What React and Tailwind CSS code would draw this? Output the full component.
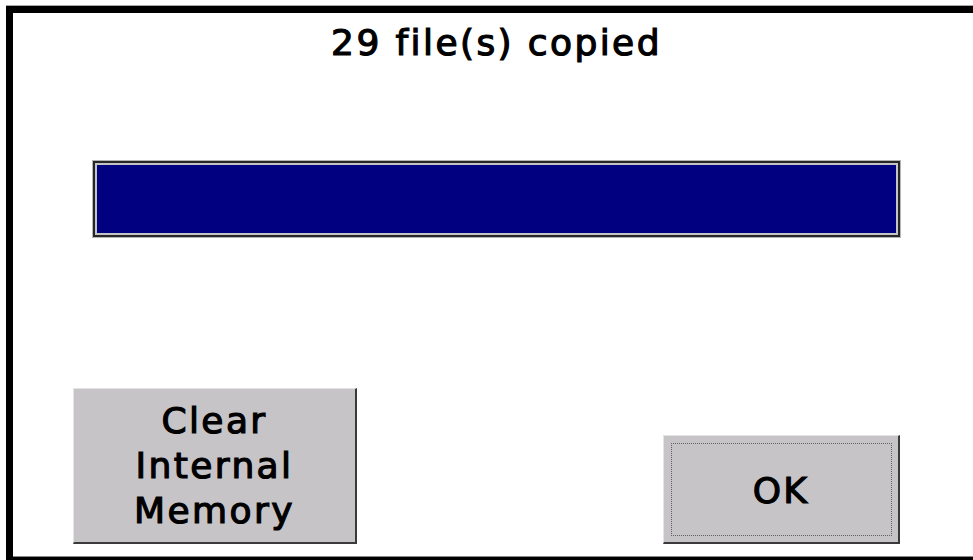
export default function App() {
  const font = { fontFamily: '"DejaVu Sans", Verdana, sans-serif' };
  return (
    <div className="h-[560px] w-[973px] overflow-hidden bg-white" style={font}>
      <div className="ml-[6px] mt-[5px] h-[560px] border-t border-[#a8a8a8]">
        <div className="flex h-[559px] flex-col border-l-[7px] border-t-[7px] border-black bg-black">
          <div className="flex h-[544px] flex-col border-b border-[#8a8a8a] bg-white">
            <div className="ml-[79px] mt-[8px] w-[809px] text-center text-[36px] leading-[44px] tracking-[2.4px] text-black [-webkit-text-stroke:1.2px_black]">
              29 file(s) copied
            </div>
            <div className="ml-[79px] mt-[95px] w-[809px] border border-[#b4b4b4]">
              <div className="border-2 border-[#262626]">
                <div className="border-2 border-[#c4c4c4]">
                  <div className="h-[68px] bg-[#000080]" />
                </div>
              </div>
            </div>
            <div className="mt-auto mb-[12px] ml-[60px] flex w-[827px] items-end justify-between">
              <div className="flex h-[156px] w-[284px] flex-col items-center justify-center border-l border-t border-r-2 border-b-2 border-l-[#e4e4e4] border-t-[#e4e4e4] border-r-[#3a3a3a] border-b-[#3a3a3a] bg-[#c7c4c7] text-[36px] leading-[45px] tracking-[2.4px] text-black [-webkit-text-stroke:1.2px_black]">
                <span>Clear</span>
                <span>Internal</span>
                <span>Memory</span>
              </div>
              <div className="flex h-[109px] w-[237px] items-center justify-center border-l border-t border-r-2 border-b-2 border-l-[#e4e4e4] border-t-[#e4e4e4] border-r-[#3a3a3a] border-b-[#3a3a3a] bg-[#c7c4c7] text-[36px] leading-[44px] tracking-[2.4px] text-black outline-1 outline-dotted outline-[#606060] outline-offset-[-9px] [-webkit-text-stroke:1.2px_black]">
                <span className="mt-[3px]">OK</span>
              </div>
            </div>
          </div>
        </div>
      </div>
    </div>
  );
}
